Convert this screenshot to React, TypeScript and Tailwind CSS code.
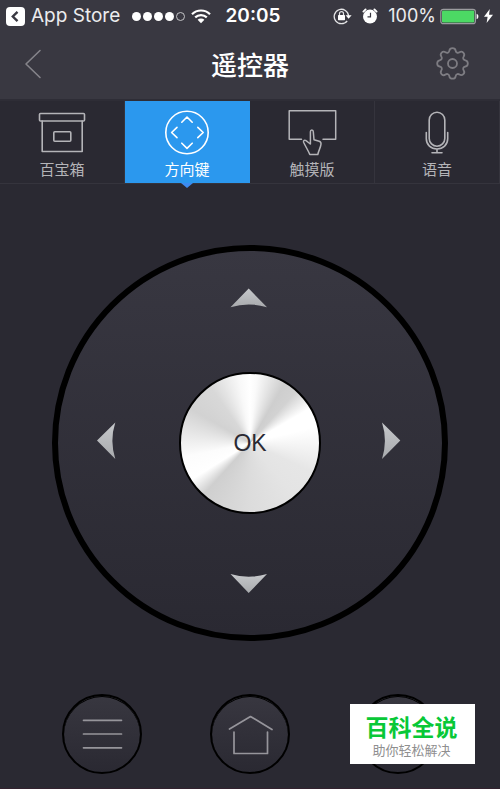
import { useState } from 'react'
import type { ReactNode } from 'react'

type TabId = 'box' | 'keys' | 'touch' | 'voice'
type Direction = 'up' | 'left' | 'right' | 'down'

const iconProps = {
  fill: 'none',
  stroke: 'currentColor',
  strokeLinecap: 'round' as const,
  strokeLinejoin: 'round' as const,
  'aria-hidden': true,
}

const tabs: Array<{ id: TabId; label: string; icon: ReactNode }> = [
  {
    id: 'box',
    label: '百宝箱',
    icon: (
      <svg width="50" height="48" viewBox="0 0 50 48" strokeWidth="1.6" {...iconProps}>
        <rect x="2.5" y="5.5" width="45" height="7.5" rx="1" />
        <path d="M5.2 13v30.5h40V13" />
        <rect x="16.8" y="23.8" width="17" height="9.4" rx="1" />
      </svg>
    ),
  },
  {
    id: 'keys',
    label: '方向键',
    icon: (
      <svg width="50" height="48" viewBox="0 0 50 48" strokeWidth="1.6" {...iconProps}>
        <circle cx="25" cy="24.5" r="21.2" />
        <path d="M19.8 14.2 25 9l5.2 5.2M19.8 35.2 25 40.4l5.2-5.2M15 19.3l-5.4 5.2L15 29.7M35.8 19.3l5.4 5.2-5.4 5.2" />
      </svg>
    ),
  },
  {
    id: 'touch',
    label: '触摸版',
    icon: (
      <svg width="50" height="48" viewBox="0 0 50 48" strokeWidth="1.5" {...iconProps}>
        <path d="M14.5 31.2H2.2V2.8h46.5v28.4H36" />
        <path d="M23.4 34.5V23.8c0-2.4 2.9-2.4 2.9 0l.7 8 5.2 1.4c1.5.5 2 1.5 1.8 3-.4 3.8-2.4 6-3.2 10.3h-8c-1.5-3.8-4-7.5-6.2-12.3-.6-2 1.2-2.5 2.5-1.5 1.8 1.2 2.6 2.4 4.3 3.3z" />
      </svg>
    ),
  },
  {
    id: 'voice',
    label: '语音',
    icon: (
      <svg width="50" height="48" viewBox="0 0 50 48" strokeWidth="1.6" {...iconProps}>
        <rect x="17.2" y="4.2" width="15.6" height="34" rx="7.8" />
        <path d="M14.3 24.5v6.3c0 6 4.7 10.2 10.7 10.2s10.7-4.2 10.7-10.2v-6.3M25 41v3.5M20 44.8h10" />
      </svg>
    ),
  },
]

const arrows: Record<Direction, { label: string; path: string }> = {
  up: { label: '上', path: 'M22.7 5.5 41 24.3Q22.7 18.5 4.5 24.3z' },
  left: { label: '左', path: 'M7 21.5 25.3 3.5Q19.5 21.5 25.3 40z' },
  right: { label: '右', path: 'M38.3 21.5 20 3.5Q25.8 21.5 20 40z' },
  down: { label: '下', path: 'M22.7 38 41 19Q22.7 24.5 4.5 19z' },
}

export default function App() {
  const [activeTab, setActiveTab] = useState<TabId>('keys')

  return (
    <div className="relative flex min-h-screen flex-col border-b border-[#33222f] bg-[#2a2932] font-['Inter','Noto_Sans_CJK_SC',sans-serif] text-white">
      <header className="border-b-2 border-[#2e2d36] bg-[#393841]">
        <StatusBar />
        <div className="grid h-[67px] grid-cols-[1fr_auto_1fr] items-center px-6 pb-1">
          <button type="button" aria-label="返回" className="justify-self-start text-[#85848a]">
            <svg width="18" height="30" viewBox="0 0 18 30" strokeWidth="1.6" {...iconProps}>
              <path d="M16 1.5 2 15l14 13.5" />
            </svg>
          </button>
          <h1 className="pt-1 text-[26px] leading-8 font-medium">遥控器</h1>
          <button type="button" aria-label="设置" className="mr-[7px] justify-self-end text-[#7d7c82]">
            <GearIcon />
          </button>
        </div>
      </header>

      <nav className="grid grid-cols-4 border-b border-[#35343d]">
        {tabs.map((tab) => {
          const active = tab.id === activeTab
          return (
            <button
              key={tab.id}
              type="button"
              aria-pressed={active}
              onClick={() => setActiveTab(tab.id)}
              className={`relative flex h-[82px] flex-col items-center border-r pt-[7px] ${
                active ? 'border-[#2b98ee] bg-[#2b98ee] text-white' : 'border-[#35343d] text-[#b4b4b8]'
              }`}
            >
              {tab.icon}
              <span className="pt-[2px] text-[15px] leading-6">{tab.label}</span>
              {active && (
                <span className="absolute top-full h-0 w-0 border-x-[6px] border-t-[5px] border-x-transparent border-t-[#3d8bf0]" />
              )}
            </button>
          )
        })}
      </nav>

      <main className="flex flex-1 flex-col justify-between pt-[61px] pb-[14px]">
        {/* Direction pad */}
        <div className="mx-[52px] flex aspect-square flex-col items-center justify-between rounded-full border-[6px] border-black bg-linear-to-b from-[#383741] to-[#2a2932] p-8">
          <ArrowButton direction="up" />
          <div className="flex w-full items-center justify-between">
            <ArrowButton direction="left" />
            <button
              type="button"
              className="size-[142px] rounded-full border-2 border-black bg-[conic-gradient(#ffffff_0deg,#fafafa_6deg,#cecece_30deg,#d2d2d2_42deg,#ffffff_60deg,#ffffff_76deg,#e6e6e6_115deg,#e4e4e4_140deg,#dcdcdc_180deg,#cfcfcf_222deg,#ffffff_238deg,#fcfcfc_258deg,#d2d2d2_300deg,#d8d8d8_325deg,#f8f8f8_350deg,#ffffff_360deg)] font-['Liberation_Sans',sans-serif] text-[23px] text-[#2b2a33]"
            >
              OK
            </button>
            <ArrowButton direction="right" />
          </div>
          <ArrowButton direction="down" />
        </div>

        <div className="flex justify-between px-[62px]">
          <RoundButton label="菜单">
            <path d="M21.5 26.3h38M21.5 40h38M21.5 53.8h38" />
          </RoundButton>
          <RoundButton label="主页">
            <path d="M19.5 35 40.5 22.5 62 35.5M24 38v21.5h33.5V38" />
          </RoundButton>
          <RoundButton label="后退">
            <path d="M34 26 22 38l12 12M22 38h36" />
          </RoundButton>
        </div>
      </main>

      <aside className="absolute right-[25px] bottom-6 flex h-[60px] w-[125px] flex-col items-center bg-white pt-[10px] pr-[2px]">
        <strong className="text-[23px] leading-7 font-bold text-[#08c837]">百科全说</strong>
        <span className="text-[13px] leading-4 text-[#8f8f8f]">助你轻松解决</span>
      </aside>
    </div>
  )
}

function StatusBar() {
  return (
    <div className="grid h-8 grid-cols-[1fr_auto_1fr] items-center pr-[7px] pl-[6px] text-[18px] leading-6">
      <div className="flex items-center">
        <svg width="19" height="19" viewBox="0 0 19 19" aria-hidden="true">
          <rect width="19" height="19" rx="4" fill="#fff" />
          <path d="M11.5 4.8 6.8 9.5l4.7 4.7" fill="none" stroke="#393841" strokeWidth="2.4" />
        </svg>
        <span className="ml-[6px] text-[19px] whitespace-nowrap text-[#ececee]">App Store</span>
        <div className="ml-3 flex gap-[2px]">
          {[1, 2, 3, 4].map((dot) => (
            <span key={dot} className="size-[9px] rounded-full bg-white" />
          ))}
          <span className="size-[9px] rounded-full border border-[#c4c4c7]" />
        </div>
        <svg className="ml-[6px]" width="20" height="15" viewBox="0 0 20 15" fill="none" stroke="#fff" aria-hidden="true">
          <path d="M1 5.2a12.8 12.8 0 0 1 18 0M4.2 8.4a8.3 8.3 0 0 1 11.6 0" strokeWidth="2.2" />
          <path d="M6.6 10.8a4.9 4.9 0 0 1 6.8 0L10 14.3z" fill="#fff" stroke="none" />
        </svg>
      </div>
      <time className="ml-[7px] text-[19px] font-semibold">20:05</time>
      <div className="flex items-center justify-end">
        {/* Rotation lock */}
        <svg width="19" height="17" viewBox="0 0 19 17" fill="none" stroke="#e4e4e6" aria-hidden="true">
          <path d="M14.2 12.8A7.2 7.2 0 1 1 15.6 8" strokeWidth="1.3" />
          <path d="M12.6 7.2h6l-3 3.6z" fill="#fff" stroke="none" />
          <rect x="5" y="7" width="7" height="5.2" rx=".6" fill="#fff" stroke="none" />
          <path d="M6.5 7V5.6a2 2 0 0 1 4 0V7" strokeWidth="1.2" />
        </svg>
        {/* Alarm */}
        <svg className="ml-[10px]" width="16" height="16" viewBox="0 0 16 16" aria-hidden="true">
          <circle cx="8" cy="8.6" r="7" fill="#fff" />
          <path d="M1.4 3.6 3.6 1.4M14.6 3.6 12.4 1.4" stroke="#fff" strokeWidth="1.9" strokeLinecap="round" />
          <path d="M8.5 4.8v4H5.5" stroke="#393841" strokeWidth="1.2" fill="none" />
        </svg>
        <span className="ml-[10px] text-[#ececee]">100%</span>
        <svg className="ml-1" width="39" height="17" viewBox="0 0 39 17" aria-hidden="true">
          <rect x=".8" y="1.3" width="34.6" height="14.4" rx="2.5" fill="none" stroke="#9b9b9f" strokeWidth="1.2" />
          <rect x="2" y="2.5" width="32.2" height="12" rx="1.2" fill="#4cd964" />
          <path d="M36.6 5.8c2.4.6 2.4 4.8 0 5.4z" fill="#fff" />
        </svg>
        <svg className="ml-[5px]" width="9" height="14" viewBox="0 0 9 14" fill="#fff" aria-hidden="true">
          <path d="M5.8 0 0 7.8h3.6L2.6 14 9 5.8H5z" />
        </svg>
      </div>
    </div>
  )
}

function GearIcon() {
  return (
    <svg width="33" height="33" viewBox="0 0 33 33" strokeWidth="1.8" {...iconProps}>
      <circle cx="16.5" cy="16.5" r="4.5" />
      <path d="M13.4 3.5c.5-3.2 5.7-3.2 6.2 0 .3 2.2 2.2 2.9 3.9 1.7 2.7-1.9 6 1.4 4.2 4.2-1.2 1.7-.4 3.6 1.7 3.9 3.2.5 3.2 5.7 0 6.2-2.1.3-2.9 2.2-1.7 3.9 1.9 2.7-1.4 6-4.2 4.2-1.7-1.2-3.6-.4-3.9 1.7-.5 3.2-5.7 3.2-6.2 0-.3-2.1-2.2-2.9-3.9-1.7-2.7 1.9-6-1.4-4.2-4.2 1.2-1.7.4-3.6-1.7-3.9-3.2-.5-3.2-5.7 0-6.2 2.1-.3 2.9-2.2 1.7-3.9-1.9-2.7 1.4-6 4.2-4.2 1.7 1.2 3.6.5 3.9-1.7z" />
    </svg>
  )
}

function ArrowButton({ direction }: { direction: Direction }) {
  const { label, path } = arrows[direction]
  const gradientId = `arrow-${direction}`

  return (
    <button type="button" aria-label={label} className="size-12 active:opacity-70">
      <svg width="48" height="48" viewBox="0 0 48 48" aria-hidden="true">
        <defs>
          <linearGradient id={gradientId} x1="0" y1="0" x2="0" y2="1">
            <stop offset="0" stopColor="#c6c8cb" />
            <stop offset="1" stopColor="#a8aaad" />
          </linearGradient>
        </defs>
        <path d={path} fill={`url(#${gradientId})`} />
      </svg>
    </button>
  )
}

function RoundButton({ label, children }: { label: string; children: ReactNode }) {
  return (
    <button
      type="button"
      aria-label={label}
      className="size-20 rounded-full border-2 border-black bg-linear-to-b from-[#383740] to-[#2a2932] text-[#96959b] shadow-[inset_0_1px_0_#000000]"
    >
      <svg className="-m-[2px]" width="80" height="80" viewBox="0 0 80 80" strokeWidth="1.7" {...iconProps}>
        {children}
      </svg>
    </button>
  )
}
